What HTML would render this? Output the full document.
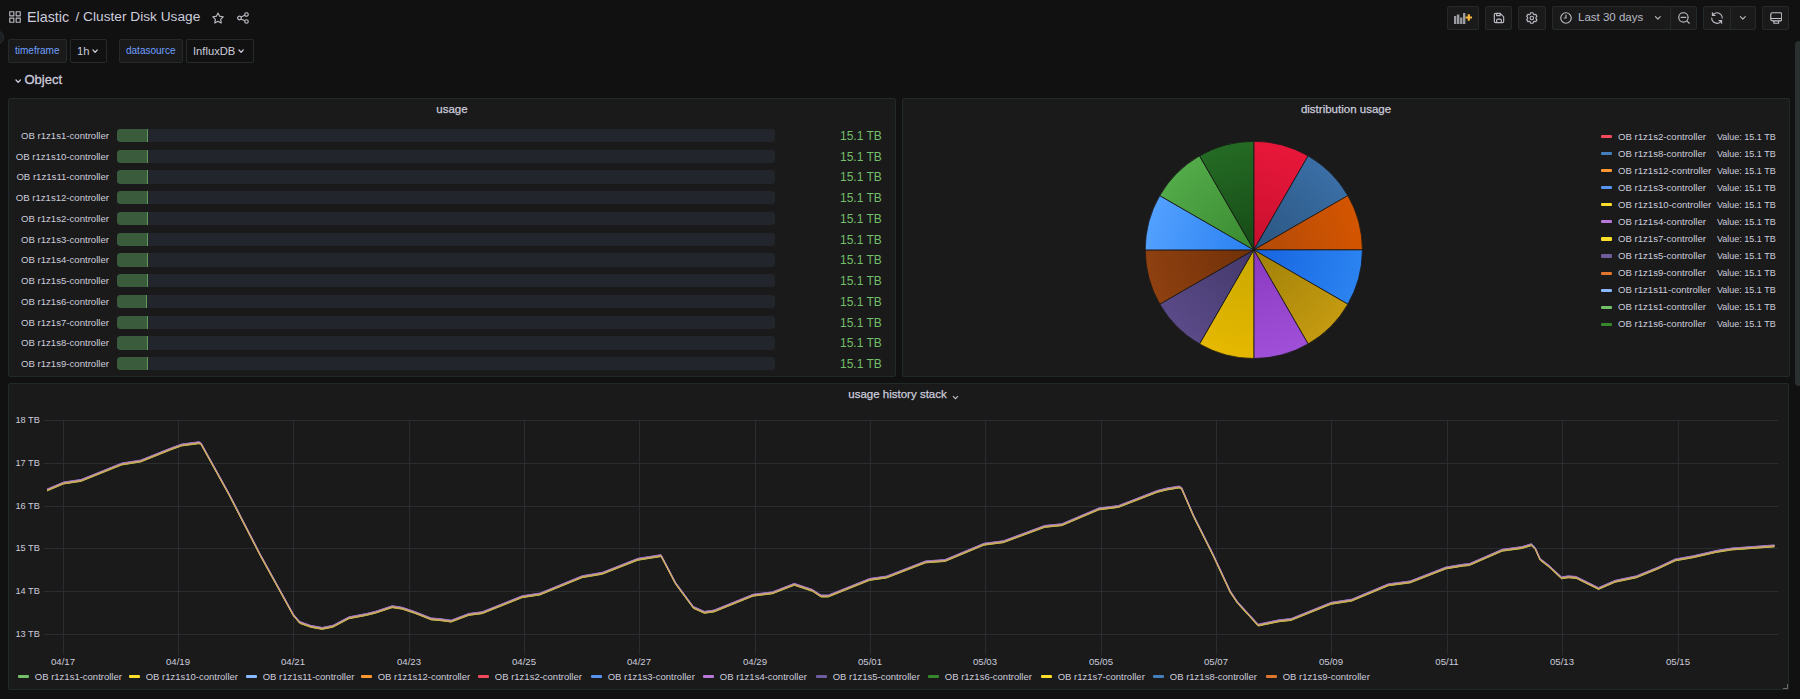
<!DOCTYPE html>
<html><head><meta charset="utf-8">
<style>
*{box-sizing:border-box;margin:0;padding:0}
html,body{width:1800px;height:699px;overflow:hidden;background:#111111;font-family:"Liberation Sans",sans-serif;color:#ccccdc;position:relative}
.abs{position:absolute}
.btn{position:absolute;top:6px;height:24px;background:#1a1a1a;border:1px solid #242a2b;border-radius:2px}
.varl{position:absolute;top:39px;height:24px;background:#1a1a1a;border:1px solid #242a2b;border-radius:2px;color:#6e9fff;font-size:10px;line-height:22px;padding-left:6px}
.varv{position:absolute;top:39px;height:24px;background:#111111;border:1px solid #242a2b;border-radius:2px;color:#ccccdc;font-size:11.2px;line-height:22px;padding-left:6px}
.panel{position:absolute;background:#1a1a1a;border:1px solid #222929;border-radius:2px}
.ptitle{position:absolute;left:0;right:0;text-align:center;font-size:11.5px;color:#ccccdc;top:2px;line-height:16px;-webkit-text-stroke:0.25px #ccccdc}
.bgr{position:absolute;left:0;width:886px;height:13.4px}
.bgl{position:absolute;right:786px;top:0;font-size:9.6px;line-height:13px;color:#ccccdc;white-space:nowrap}
.bgb{position:absolute;left:108px;width:658px;top:0;height:13.4px;background:#22252b;border-radius:3px;overflow:hidden}
.bgf{position:absolute;left:0;top:0;width:31px;height:13.4px;background:#3a5c3d;border-right:1.5px solid #5f9a58;border-radius:3px 0 0 3px}
.bgv{position:absolute;left:831px;top:-0.9px;font-size:12px;letter-spacing:0;line-height:16px;color:#73bf69;white-space:nowrap}
.pl{position:absolute;left:698px;height:13px;width:190px}
.pl i{position:absolute;left:0;top:6.4px;width:11px;height:3.2px;border-radius:1px}
.pl .pn{position:absolute;left:17px;top:1.0px;font-size:9.6px;line-height:13px;white-space:nowrap;color:#ccccdc}
.pl .pv{position:absolute;left:116px;top:2.0px;font-size:9px;line-height:13px;white-space:nowrap;color:#ccccdc}
.ylab{position:absolute;left:0;width:30.8px;text-align:right;font-size:9.2px;line-height:12px;color:#ccccdc;white-space:nowrap}
.xlab{position:absolute;top:272px;width:40px;text-align:center;font-size:9.6px;line-height:12px;color:#ccccdc}
.tsleg{position:absolute;left:0;top:286px;height:14px;width:1700px}
.li{position:absolute;top:0;height:14px;white-space:nowrap}
.li i{position:absolute;left:0;top:5.2px;width:11.1px;height:3.2px;border-radius:1px}
.li span{position:absolute;left:16.9px;top:0;font-size:9.5px;line-height:14px;color:#ccccdc}
</style></head><body>

<!-- sidebar toggle circle -->
<div class="abs" style="left:-11px;top:30px;width:15px;height:15px;border-radius:50%;background:#1c1f24;border:1px solid #2a2e33"></div>

<!-- header -->
<svg class="abs" style="left:7.80px;top:10.45px" width="14" height="14" viewBox="0 0 24 24"><path d="M10,13H3a1,1,0,0,0-1,1v7a1,1,0,0,0,1,1h7a1,1,0,0,0,1-1V14A1,1,0,0,0,10,13ZM9,20H4V15H9ZM21,2H14a1,1,0,0,0-1,1v7a1,1,0,0,0,1,1h7a1,1,0,0,0,1-1V3A1,1,0,0,0,21,2ZM20,9H15V4h5Zm1,4H14a1,1,0,0,0-1,1v7a1,1,0,0,0,1,1h7a1,1,0,0,0,1-1V14A1,1,0,0,0,21,13Zm-1,7H15V15h5ZM10,2H3A1,1,0,0,0,2,3v7a1,1,0,0,0,1,1h7a1,1,0,0,0,1-1V3A1,1,0,0,0,10,2ZM9,9H4V4H9Z" fill="#b9b9c2"/></svg>
<div class="abs" style="left:27px;top:8px;font-size:14.3px;line-height:18px;color:#ccccdc;white-space:nowrap">Elastic</div>
<div class="abs" style="left:75.5px;top:8px;font-size:13.7px;line-height:18px;color:#ccccdc;white-space:nowrap">/ Cluster Disk Usage</div>
<svg class="abs" style="left:210.80px;top:10.70px" width="14" height="14" viewBox="0 0 24 24"><path d="M22,9.67A1,1,0,0,0,21.14,9l-5.69-.83L12.9,3a1,1,0,0,0-1.8,0L8.55,8.16,2.86,9a1,1,0,0,0-.81.68,1,1,0,0,0,.25,1l4.13,4-1,5.68A1,1,0,0,0,6.9,21.44L12,18.77l5.1,2.67a.93.93,0,0,0,.46.12,1,1,0,0,0,.59-.19,1,1,0,0,0,.4-1l-1-5.68,4.13-4A1,1,0,0,0,22,9.67Zm-6.150,4a1,1,0,0,0-.29.88l.72,4.2-3.76-2a1.060,1.060,0,0,0-.94,0l-3.76,2,.72-4.2a1,1,0,0,0-.29-.88l-3-3,4.21-.61a1,1,0,0,0,.76-.55L12,5.7l1.88,3.82a1,1,0,0,0,.76.55l4.21.61Z" fill="#b9b9c2"/></svg>
<svg class="abs" style="left:235.75px;top:10.70px" width="14" height="14" viewBox="0 0 24 24"><path d="M18,14a4,4,0,0,0-3.08,1.48l-5.1-2.35a3.64,3.64,0,0,0,0-2.26l5.1-2.35A4,4,0,1,0,14,6a4.17,4.17,0,0,0,.07.71L8.79,9.14a4,4,0,1,0,0,5.72l5.28,2.43A4.17,4.17,0,0,0,14,18a4,4,0,1,0,4-4ZM18,4a2,2,0,1,1-2,2A2,2,0,0,1,18,4ZM6,14a2,2,0,1,1,2-2A2,2,0,0,1,6,14Zm12,6a2,2,0,1,1,2-2A2,2,0,0,1,18,20Z" fill="#b9b9c2"/></svg>

<!-- toolbar -->
<div class="btn" style="left:1447px;width:32px"></div>
<svg class="abs" style="left:1454px;top:12px" width="20" height="12" viewBox="0 0 20 12">
 <g fill="#9b9ca2"><rect x="0" y="4" width="2.2" height="8"/><rect x="2.8" y="2.5" width="2.6" height="9.5"/><rect x="6.1" y="5.5" width="2.3" height="6.5"/><rect x="9" y="1" width="2.4" height="11"/></g>
 <path d="M14.8 2.3v6.4M11.6 5.5h6.4" stroke="#f5b73d" stroke-width="2.2"/></svg>
<div class="btn" style="left:1485px;width:27px"></div>
<svg class="abs" style="left:1491.85px;top:11.00px" width="14" height="14" viewBox="0 0 24 24"><path d="M20.71,9.29l-6-6a1,1,0,0,0-.32-.21A1.090,1.090,0,0,0,14,3H6A3,3,0,0,0,3,6V18a3,3,0,0,0,3,3H18a3,3,0,0,0,3-3V10A1,1,0,0,0,20.71,9.29ZM9,5h4V7H9Zm6,14H9V16a1,1,0,0,1,1-1h4a1,1,0,0,1,1,1Zm4-1a1,1,0,0,1-1,1H17V16a3,3,0,0,0-3-3H10a3,3,0,0,0-3,3v3H6a1,1,0,0,1-1-1V6A1,1,0,0,1,6,5H7V8A1,1,0,0,0,8,9h6a1,1,0,0,0,1-1V6.410l4,4Z" fill="#b9b9c2"/></svg>
<div class="btn" style="left:1518px;width:28px"></div>
<svg class="abs" style="left:1524.90px;top:10.85px" width="14" height="14" viewBox="0 0 24 24"><path d="M19.9,12.66a1,1,0,0,1,0-1.32L21.18,9.9a1,1,0,0,0,.12-1.17l-2-3.46a1,1,0,0,0-1.07-.48l-1.88.38a1,1,0,0,1-1.15-.66l-.61-1.83A1,1,0,0,0,13.64,2h-4a1,1,0,0,0-1,.68L8.08,4.51a1,1,0,0,1-1.15.66L5,4.790A1,1,0,0,0,4,5.270L2,8.730A1,1,0,0,0,2.100,9.900l1.27,1.440a1,1,0,0,1,0,1.320L2.100,14.100A1,1,0,0,0,2,15.270l2,3.460a1,1,0,0,0,1.070.480l1.880-.380a1,1,0,0,1,1.150.660l.610,1.830a1,1,0,0,0,1,.680h4a1,1,0,0,0,.950-.680l.610-1.830a1,1,0,0,1,1.150-.660l1.880.380a1,1,0,0,0,1.070-.480l2-3.460a1,1,0,0,0-.120-1.170ZM18.410,14l.8.9-1.280,2.220-1.180-.240a3,3,0,0,0-3.450,2L12.920,20H10.360L10,18.860a3,3,0,0,0-3.450-2l-1.180.240L4.070,14.890l.8-.9a3,3,0,0,0,0-4l-.8-.9L5.350,6.890l1.180.240a3,3,0,0,0,3.450-2L10.360,4h2.560l.380,1.140a3,3,0,0,0,3.450,2l1.180-.240,1.280,2.220-.8.9a3,3,0,0,0,0,3.980Zm-6.770-6a4,4,0,1,0,4,4A4,4,0,0,0,11.640,8Zm0,6a2,2,0,1,1,2-2A2,2,0,0,1,11.640,14Z" fill="#b9b9c2"/></svg>
<div class="btn" style="left:1552px;width:145px"></div>
<div class="abs" style="left:1670px;top:7px;width:1px;height:22px;background:#242a2b"></div>
<svg class="abs" style="left:1558.60px;top:10.75px" width="14" height="14" viewBox="0 0 24 24"><path d="M12,2A10,10,0,1,0,22,12,10.011,10.011,0,0,0,12,2Zm0,18a8,8,0,1,1,8-8A8.009,8.009,0,0,1,12,20Zm0-14a1,1,0,0,0-1,1v4H9a1,1,0,0,0,0,2h3a1,1,0,0,0,1-1V7A1,1,0,0,0,12,6Z" fill="#b9b9c2"/></svg>
<div class="abs" style="left:1578px;top:10px;font-size:11.5px;line-height:15px;color:#b9b9c4;white-space:nowrap">Last 30 days</div>
<svg class="abs" style="left:1651.15px;top:10.90px" width="13.7" height="13.7" viewBox="0 0 24 24"><path d="M17,9.17a1,1,0,0,0-1.41,0L12,12.71,8.46,9.17a1,1,0,0,0-1.41,0,1,1,0,0,0,0,1.42l4.24,4.24a1,1,0,0,0,1.42,0L17,10.59A1,1,0,0,0,17,9.17Z" fill="#b9b9c2"/></svg>
<svg class="abs" style="left:1676.50px;top:10.75px" width="14" height="14" viewBox="0 0 24 24"><path d="M21.71,20.29,18,16.61A9,9,0,1,0,16.61,18l3.68,3.68a1,1,0,0,0,1.42,0A1,1,0,0,0,21.71,20.29ZM11,18a7,7,0,1,1,7-7A7,7,0,0,1,11,18Zm4-8H7a1,1,0,0,0,0,2h8a1,1,0,0,0,0-2Z" fill="#b9b9c2"/></svg>
<div class="btn" style="left:1703px;width:53px"></div>
<div class="abs" style="left:1730px;top:7px;width:1px;height:22px;background:#242a2b"></div>
<svg class="abs" style="left:1709.50px;top:10.80px" width="14" height="14" viewBox="0 0 24 24"><path d="M19.91,15.51H15.38a1,1,0,0,0,0,2h2.4A8,8,0,0,1,4,12a1,1,0,0,0-2,0,10,10,0,0,0,16.88,7.23V21a1,1,0,0,0,2,0V16.5A1,1,0,0,0,19.91,15.51ZM12,2A10,10,0,0,0,5.12,4.77V3a1,1,0,0,0-2,0V7.5a1,1,0,0,0,1,1h4.5a1,1,0,0,0,0-2H6.22A8,8,0,0,1,20,12a1,1,0,0,0,2,0A10,10,0,0,0,12,2Z" fill="#b9b9c2"/></svg>
<svg class="abs" style="left:1736.15px;top:10.90px" width="13.7" height="13.7" viewBox="0 0 24 24"><path d="M17,9.17a1,1,0,0,0-1.41,0L12,12.71,8.46,9.17a1,1,0,0,0-1.41,0,1,1,0,0,0,0,1.42l4.24,4.24a1,1,0,0,0,1.42,0L17,10.59A1,1,0,0,0,17,9.17Z" fill="#b9b9c2"/></svg>
<div class="btn" style="left:1762px;width:27px"></div>
<svg class="abs" style="left:1769.5px;top:11.5px" width="12.5" height="12.5" viewBox="0 0 24 24"><g fill="none" stroke="#c2c2cc" stroke-width="2.2" stroke-linejoin="round"><rect x="1.5" y="1.5" width="21" height="15.5" rx="3"/><path d="M1.5 12.5h21M7.5 17v4.5h9V17"/></g></svg>

<!-- variables -->
<div class="varl" style="left:8px;width:59px">timeframe</div>
<div class="varv" style="left:70px;width:37px">1h</div>
<svg class="abs" style="left:92.15px;top:48.95px" width="6.2" height="4.3" viewBox="0 0 6.2 4.3"><path d="M1 1L3.1 3.3L5.2 1" fill="none" stroke="#ccccdc" stroke-width="1.2" stroke-linecap="round" stroke-linejoin="round"/></svg>
<div class="varl" style="left:119px;width:64px">datasource</div>
<div class="varv" style="left:186px;width:68px">InfluxDB</div>
<svg class="abs" style="left:238.15px;top:48.95px" width="6.2" height="4.3" viewBox="0 0 6.2 4.3"><path d="M1 1L3.1 3.3L5.2 1" fill="none" stroke="#ccccdc" stroke-width="1.2" stroke-linecap="round" stroke-linejoin="round"/></svg>

<!-- row -->
<svg class="abs" style="left:14.80px;top:78.60px" width="6.4" height="4.4" viewBox="0 0 6.4 4.4"><path d="M1 1L3.2 3.4L5.4 1" fill="none" stroke="#ccccdc" stroke-width="1.3" stroke-linecap="round" stroke-linejoin="round"/></svg>
<div class="abs" style="left:24.5px;top:72px;font-size:13px;line-height:16px;color:#ccccdc;white-space:nowrap;-webkit-text-stroke:0.3px #ccccdc">Object</div>

<!-- panel 1 -->
<div class="panel" style="left:8px;top:98px;width:888px;height:279px">
 <div class="ptitle">usage</div>
 <div class="bgr" style="top:29.80px"><div class="bgl">OB r1z1s1-controller</div><div class="bgb"><div class="bgf"></div></div><div class="bgv">15.1 TB</div></div><div class="bgr" style="top:50.55px"><div class="bgl">OB r1z1s10-controller</div><div class="bgb"><div class="bgf"></div></div><div class="bgv">15.1 TB</div></div><div class="bgr" style="top:71.30px"><div class="bgl">OB r1z1s11-controller</div><div class="bgb"><div class="bgf"></div></div><div class="bgv">15.1 TB</div></div><div class="bgr" style="top:92.05px"><div class="bgl">OB r1z1s12-controller</div><div class="bgb"><div class="bgf"></div></div><div class="bgv">15.1 TB</div></div><div class="bgr" style="top:112.80px"><div class="bgl">OB r1z1s2-controller</div><div class="bgb"><div class="bgf"></div></div><div class="bgv">15.1 TB</div></div><div class="bgr" style="top:133.55px"><div class="bgl">OB r1z1s3-controller</div><div class="bgb"><div class="bgf"></div></div><div class="bgv">15.1 TB</div></div><div class="bgr" style="top:154.30px"><div class="bgl">OB r1z1s4-controller</div><div class="bgb"><div class="bgf"></div></div><div class="bgv">15.1 TB</div></div><div class="bgr" style="top:175.05px"><div class="bgl">OB r1z1s5-controller</div><div class="bgb"><div class="bgf"></div></div><div class="bgv">15.1 TB</div></div><div class="bgr" style="top:195.80px"><div class="bgl">OB r1z1s6-controller</div><div class="bgb"><div class="bgf" style="width:30px"></div></div><div class="bgv">15.1 TB</div></div><div class="bgr" style="top:216.55px"><div class="bgl">OB r1z1s7-controller</div><div class="bgb"><div class="bgf"></div></div><div class="bgv">15.1 TB</div></div><div class="bgr" style="top:237.30px"><div class="bgl">OB r1z1s8-controller</div><div class="bgb"><div class="bgf"></div></div><div class="bgv">15.1 TB</div></div><div class="bgr" style="top:258.05px"><div class="bgl">OB r1z1s9-controller</div><div class="bgb"><div class="bgf"></div></div><div class="bgv">15.1 TB</div></div>
</div>

<!-- panel 2 -->
<div class="panel" style="left:902px;top:98px;width:888px;height:279px">
 <div class="ptitle">distribution usage</div>
 <svg class="abs" style="left:0;top:0" width="886" height="277"><defs><radialGradient id="g0" gradientUnits="userSpaceOnUse" cx="350.79999999999995" cy="150.9" r="108.6"><stop offset="0" stop-color="#c8102e"/><stop offset="1" stop-color="#e8173a"/></radialGradient><radialGradient id="g1" gradientUnits="userSpaceOnUse" cx="350.79999999999995" cy="150.9" r="108.6"><stop offset="0" stop-color="#2a5580"/><stop offset="1" stop-color="#3a6ea5"/></radialGradient><radialGradient id="g2" gradientUnits="userSpaceOnUse" cx="350.79999999999995" cy="150.9" r="108.6"><stop offset="0" stop-color="#b04a08"/><stop offset="1" stop-color="#d45500"/></radialGradient><radialGradient id="g3" gradientUnits="userSpaceOnUse" cx="350.79999999999995" cy="150.9" r="108.6"><stop offset="0" stop-color="#1664e0"/><stop offset="1" stop-color="#2b83f0"/></radialGradient><radialGradient id="g4" gradientUnits="userSpaceOnUse" cx="350.79999999999995" cy="150.9" r="108.6"><stop offset="0" stop-color="#a08008"/><stop offset="1" stop-color="#c49a10"/></radialGradient><radialGradient id="g5" gradientUnits="userSpaceOnUse" cx="350.79999999999995" cy="150.9" r="108.6"><stop offset="0" stop-color="#8a38c0"/><stop offset="1" stop-color="#a050d8"/></radialGradient><radialGradient id="g6" gradientUnits="userSpaceOnUse" cx="350.79999999999995" cy="150.9" r="108.6"><stop offset="0" stop-color="#c8a800"/><stop offset="1" stop-color="#e6b800"/></radialGradient><radialGradient id="g7" gradientUnits="userSpaceOnUse" cx="350.79999999999995" cy="150.9" r="108.6"><stop offset="0" stop-color="#43386a"/><stop offset="1" stop-color="#5a4a88"/></radialGradient><radialGradient id="g8" gradientUnits="userSpaceOnUse" cx="350.79999999999995" cy="150.9" r="108.6"><stop offset="0" stop-color="#703008"/><stop offset="1" stop-color="#8e4010"/></radialGradient><radialGradient id="g9" gradientUnits="userSpaceOnUse" cx="350.79999999999995" cy="150.9" r="108.6"><stop offset="0" stop-color="#2a80f0"/><stop offset="1" stop-color="#52a0ff"/></radialGradient><radialGradient id="g10" gradientUnits="userSpaceOnUse" cx="350.79999999999995" cy="150.9" r="108.6"><stop offset="0" stop-color="#3a8a30"/><stop offset="1" stop-color="#52aa48"/></radialGradient><radialGradient id="g11" gradientUnits="userSpaceOnUse" cx="350.79999999999995" cy="150.9" r="108.6"><stop offset="0" stop-color="#164a16"/><stop offset="1" stop-color="#246a24"/></radialGradient></defs><path d="M350.79999999999995,150.9 L350.80,42.30 A108.6,108.6 0 0 1 405.10,56.85 Z" fill="url(#g0)" stroke="#161616" stroke-width="0.8"/><path d="M350.79999999999995,150.9 L405.10,56.85 A108.6,108.6 0 0 1 444.85,96.60 Z" fill="url(#g1)" stroke="#161616" stroke-width="0.8"/><path d="M350.79999999999995,150.9 L444.85,96.60 A108.6,108.6 0 0 1 459.40,150.90 Z" fill="url(#g2)" stroke="#161616" stroke-width="0.8"/><path d="M350.79999999999995,150.9 L459.40,150.90 A108.6,108.6 0 0 1 444.85,205.20 Z" fill="url(#g3)" stroke="#161616" stroke-width="0.8"/><path d="M350.79999999999995,150.9 L444.85,205.20 A108.6,108.6 0 0 1 405.10,244.95 Z" fill="url(#g4)" stroke="#161616" stroke-width="0.8"/><path d="M350.79999999999995,150.9 L405.10,244.95 A108.6,108.6 0 0 1 350.80,259.50 Z" fill="url(#g5)" stroke="#161616" stroke-width="0.8"/><path d="M350.79999999999995,150.9 L350.80,259.50 A108.6,108.6 0 0 1 296.50,244.95 Z" fill="url(#g6)" stroke="#161616" stroke-width="0.8"/><path d="M350.79999999999995,150.9 L296.50,244.95 A108.6,108.6 0 0 1 256.75,205.20 Z" fill="url(#g7)" stroke="#161616" stroke-width="0.8"/><path d="M350.79999999999995,150.9 L256.75,205.20 A108.6,108.6 0 0 1 242.20,150.90 Z" fill="url(#g8)" stroke="#161616" stroke-width="0.8"/><path d="M350.79999999999995,150.9 L242.20,150.90 A108.6,108.6 0 0 1 256.75,96.60 Z" fill="url(#g9)" stroke="#161616" stroke-width="0.8"/><path d="M350.79999999999995,150.9 L256.75,96.60 A108.6,108.6 0 0 1 296.50,56.85 Z" fill="url(#g10)" stroke="#161616" stroke-width="0.8"/><path d="M350.79999999999995,150.9 L296.50,56.85 A108.6,108.6 0 0 1 350.80,42.30 Z" fill="url(#g11)" stroke="#161616" stroke-width="0.8"/></svg>
 <div class="pl" style="top:29.50px"><i style="background:#f2495c"></i><span class="pn">OB r1z1s2-controller</span><span class="pv">Value: 15.1 TB</span></div><div class="pl" style="top:46.58px"><i style="background:#447ebc"></i><span class="pn">OB r1z1s8-controller</span><span class="pv">Value: 15.1 TB</span></div><div class="pl" style="top:63.66px"><i style="background:#ff9830"></i><span class="pn">OB r1z1s12-controller</span><span class="pv">Value: 15.1 TB</span></div><div class="pl" style="top:80.74px"><i style="background:#5794f2"></i><span class="pn">OB r1z1s3-controller</span><span class="pv">Value: 15.1 TB</span></div><div class="pl" style="top:97.82px"><i style="background:#fade2a"></i><span class="pn">OB r1z1s10-controller</span><span class="pv">Value: 15.1 TB</span></div><div class="pl" style="top:114.90px"><i style="background:#b877d9"></i><span class="pn">OB r1z1s4-controller</span><span class="pv">Value: 15.1 TB</span></div><div class="pl" style="top:131.98px"><i style="background:#fade2a"></i><span class="pn">OB r1z1s7-controller</span><span class="pv">Value: 15.1 TB</span></div><div class="pl" style="top:149.06px"><i style="background:#705da0"></i><span class="pn">OB r1z1s5-controller</span><span class="pv">Value: 15.1 TB</span></div><div class="pl" style="top:166.14px"><i style="background:#e0752d"></i><span class="pn">OB r1z1s9-controller</span><span class="pv">Value: 15.1 TB</span></div><div class="pl" style="top:183.22px"><i style="background:#8ab8ff"></i><span class="pn">OB r1z1s11-controller</span><span class="pv">Value: 15.1 TB</span></div><div class="pl" style="top:200.30px"><i style="background:#73bf69"></i><span class="pn">OB r1z1s1-controller</span><span class="pv">Value: 15.1 TB</span></div><div class="pl" style="top:217.38px"><i style="background:#37872d"></i><span class="pn">OB r1z1s6-controller</span><span class="pv">Value: 15.1 TB</span></div>
</div>

<!-- panel 3 -->
<div class="panel" style="left:8px;top:383px;width:1781px;height:307px">
 <div class="ptitle" style="right:2px">usage history stack</div>
 <svg class="abs" style="left:942.5px;top:10.5px" width="7" height="5" viewBox="0 0 7 5"><path d="M1 1.2l2.5 2.5 2.5-2.5" fill="none" stroke="#c0c0ca" stroke-width="1.1"/></svg>
 <svg class="abs" style="left:-1px;top:-1px" width="1781" height="307"><line x1="36" y1="37.5" x2="1770" y2="37.5" stroke="#292c31" stroke-width="1"/>
<line x1="36" y1="80.5" x2="1770" y2="80.5" stroke="#292c31" stroke-width="1"/>
<line x1="36" y1="123.5" x2="1770" y2="123.5" stroke="#292c31" stroke-width="1"/>
<line x1="36" y1="165.5" x2="1770" y2="165.5" stroke="#292c31" stroke-width="1"/>
<line x1="36" y1="208.5" x2="1770" y2="208.5" stroke="#292c31" stroke-width="1"/>
<line x1="36" y1="251.5" x2="1770" y2="251.5" stroke="#292c31" stroke-width="1"/>
<line x1="55.5" y1="37" x2="55.5" y2="272" stroke="#292c31" stroke-width="1"/>
<line x1="170.5" y1="37" x2="170.5" y2="272" stroke="#292c31" stroke-width="1"/>
<line x1="285.5" y1="37" x2="285.5" y2="272" stroke="#292c31" stroke-width="1"/>
<line x1="401.5" y1="37" x2="401.5" y2="272" stroke="#292c31" stroke-width="1"/>
<line x1="516.5" y1="37" x2="516.5" y2="272" stroke="#292c31" stroke-width="1"/>
<line x1="631.5" y1="37" x2="631.5" y2="272" stroke="#292c31" stroke-width="1"/>
<line x1="747.5" y1="37" x2="747.5" y2="272" stroke="#292c31" stroke-width="1"/>
<line x1="862.5" y1="37" x2="862.5" y2="272" stroke="#292c31" stroke-width="1"/>
<line x1="977.5" y1="37" x2="977.5" y2="272" stroke="#292c31" stroke-width="1"/>
<line x1="1093.5" y1="37" x2="1093.5" y2="272" stroke="#292c31" stroke-width="1"/>
<line x1="1208.5" y1="37" x2="1208.5" y2="272" stroke="#292c31" stroke-width="1"/>
<line x1="1323.5" y1="37" x2="1323.5" y2="272" stroke="#292c31" stroke-width="1"/>
<line x1="1439.5" y1="37" x2="1439.5" y2="272" stroke="#292c31" stroke-width="1"/>
<line x1="1554.5" y1="37" x2="1554.5" y2="272" stroke="#292c31" stroke-width="1"/>
<line x1="1670.5" y1="37" x2="1670.5" y2="272" stroke="#292c31" stroke-width="1"/>
<path d="M39.00,106.05 L55.60,99.05 L73.00,96.45 L79.00,94.05 L113.80,80.05 L132.70,77.05 L162.60,65.05 L173.60,61.05 L191.00,58.75 L193.00,59.65 L220.90,110.05 L252.30,171.05 L285.40,231.05 L291.70,238.45 L303.00,242.45 L314.20,244.45 L325.00,242.25 L340.90,233.85 L358.70,230.45 L367.60,228.25 L384.20,222.75 L394.20,224.25 L407.60,228.75 L423.10,234.95 L432.00,235.65 L443.10,237.15 L460.90,230.45 L474.20,228.75 L514.20,212.75 L532.00,210.05 L574.20,192.75 L594.20,189.35 L629.80,175.35 L653.10,171.65 L667.60,199.35 L685.40,223.45 L696.30,228.35 L706.00,227.05 L745.00,211.25 L764.40,208.85 L786.30,200.35 L804.50,206.45 L813.00,212.05 L820.30,212.05 L861.70,195.45 L878.70,193.05 L917.60,177.95 L937.00,176.55 L976.00,160.25 L995.40,157.75 L1036.70,142.45 L1053.80,140.75 L1090.90,124.95 L1110.40,122.55 L1149.30,107.45 L1159.00,105.05 L1171.10,103.05 L1173.60,104.25 L1185.70,132.25 L1205.20,171.15 L1222.20,207.65 L1229.50,218.55 L1250.20,241.15 L1270.80,236.85 L1283.00,235.55 L1323.10,219.35 L1343.80,216.15 L1380.30,200.85 L1402.20,197.95 L1437.80,184.05 L1455.30,181.15 L1461.20,180.65 L1494.20,166.25 L1513.70,163.65 L1523.40,160.75 L1527.30,164.65 L1532.10,175.35 L1540.90,182.15 L1553.50,193.85 L1560.30,192.85 L1568.10,193.45 L1590.50,204.55 L1607.00,197.35 L1628.40,192.85 L1649.80,184.15 L1667.30,175.95 L1684.80,172.85 L1708.10,167.55 L1723.70,165.05 L1766.40,161.95" fill="none" stroke="#b877d9" stroke-width="1.0" stroke-linejoin="round"/>
<path d="M39.00,107.95 L55.60,100.95 L73.00,98.35 L79.00,95.95 L113.80,81.95 L132.70,78.95 L162.60,66.95 L173.60,62.95 L191.00,60.65 L193.00,61.55 L220.90,111.95 L252.30,172.95 L285.40,232.95 L291.70,240.35 L303.00,244.35 L314.20,246.35 L325.00,244.15 L340.90,235.75 L358.70,232.35 L367.60,230.15 L384.20,224.65 L394.20,226.15 L407.60,230.65 L423.10,236.85 L432.00,237.55 L443.10,239.05 L460.90,232.35 L474.20,230.65 L514.20,214.65 L532.00,211.95 L574.20,194.65 L594.20,191.25 L629.80,177.25 L653.10,173.55 L667.60,201.25 L685.40,225.35 L696.30,230.25 L706.00,228.95 L745.00,213.15 L764.40,210.75 L786.30,202.25 L804.50,208.35 L813.00,213.95 L820.30,213.95 L861.70,197.35 L878.70,194.95 L917.60,179.85 L937.00,178.45 L976.00,162.15 L995.40,159.65 L1036.70,144.35 L1053.80,142.65 L1090.90,126.85 L1110.40,124.45 L1149.30,109.35 L1159.00,106.95 L1171.10,104.95 L1173.60,106.15 L1185.70,134.15 L1205.20,173.05 L1222.20,209.55 L1229.50,220.45 L1250.20,243.05 L1270.80,238.75 L1283.00,237.45 L1323.10,221.25 L1343.80,218.05 L1380.30,202.75 L1402.20,199.85 L1437.80,185.95 L1455.30,183.05 L1461.20,182.55 L1494.20,168.15 L1513.70,165.55 L1523.40,162.65 L1527.30,166.55 L1532.10,177.25 L1540.90,184.05 L1553.50,195.75 L1560.30,194.75 L1568.10,195.35 L1590.50,206.45 L1607.00,199.25 L1628.40,194.75 L1649.80,186.05 L1667.30,177.85 L1684.80,174.75 L1708.10,169.45 L1723.70,166.95 L1766.40,163.85" fill="none" stroke="#fade2a" stroke-width="1.0" stroke-linejoin="round"/>
<path d="M39.00,106.40 L55.60,99.40 L73.00,96.80 L79.00,94.40 L113.80,80.40 L132.70,77.40 L162.60,65.40 L173.60,61.40 L191.00,59.10 L193.00,60.00 L220.90,110.40 L252.30,171.40 L285.40,231.40 L291.70,238.80 L303.00,242.80 L314.20,244.80 L325.00,242.60 L340.90,234.20 L358.70,230.80 L367.60,228.60 L384.20,223.10 L394.20,224.60 L407.60,229.10 L423.10,235.30 L432.00,236.00 L443.10,237.50 L460.90,230.80 L474.20,229.10 L514.20,213.10 L532.00,210.40 L574.20,193.10 L594.20,189.70 L629.80,175.70 L653.10,172.00 L667.60,199.70 L685.40,223.80 L696.30,228.70 L706.00,227.40 L745.00,211.60 L764.40,209.20 L786.30,200.70 L804.50,206.80 L813.00,212.40 L820.30,212.40 L861.70,195.80 L878.70,193.40 L917.60,178.30 L937.00,176.90 L976.00,160.60 L995.40,158.10 L1036.70,142.80 L1053.80,141.10 L1090.90,125.30 L1110.40,122.90 L1149.30,107.80 L1159.00,105.40 L1171.10,103.40 L1173.60,104.60 L1185.70,132.60 L1205.20,171.50 L1222.20,208.00 L1229.50,218.90 L1250.20,241.50 L1270.80,237.20 L1283.00,235.90 L1323.10,219.70 L1343.80,216.50 L1380.30,201.20 L1402.20,198.30 L1437.80,184.40 L1455.30,181.50 L1461.20,181.00 L1494.20,166.60 L1513.70,164.00 L1523.40,161.10 L1527.30,165.00 L1532.10,175.70 L1540.90,182.50 L1553.50,194.20 L1560.30,193.20 L1568.10,193.80 L1590.50,204.90 L1607.00,197.70 L1628.40,193.20 L1649.80,184.50 L1667.30,176.30 L1684.80,173.20 L1708.10,167.90 L1723.70,165.40 L1766.40,162.30" fill="none" stroke="#5794f2" stroke-width="1.0" stroke-linejoin="round"/>
<path d="M39.00,107.65 L55.60,100.65 L73.00,98.05 L79.00,95.65 L113.80,81.65 L132.70,78.65 L162.60,66.65 L173.60,62.65 L191.00,60.35 L193.00,61.25 L220.90,111.65 L252.30,172.65 L285.40,232.65 L291.70,240.05 L303.00,244.05 L314.20,246.05 L325.00,243.85 L340.90,235.45 L358.70,232.05 L367.60,229.85 L384.20,224.35 L394.20,225.85 L407.60,230.35 L423.10,236.55 L432.00,237.25 L443.10,238.75 L460.90,232.05 L474.20,230.35 L514.20,214.35 L532.00,211.65 L574.20,194.35 L594.20,190.95 L629.80,176.95 L653.10,173.25 L667.60,200.95 L685.40,225.05 L696.30,229.95 L706.00,228.65 L745.00,212.85 L764.40,210.45 L786.30,201.95 L804.50,208.05 L813.00,213.65 L820.30,213.65 L861.70,197.05 L878.70,194.65 L917.60,179.55 L937.00,178.15 L976.00,161.85 L995.40,159.35 L1036.70,144.05 L1053.80,142.35 L1090.90,126.55 L1110.40,124.15 L1149.30,109.05 L1159.00,106.65 L1171.10,104.65 L1173.60,105.85 L1185.70,133.85 L1205.20,172.75 L1222.20,209.25 L1229.50,220.15 L1250.20,242.75 L1270.80,238.45 L1283.00,237.15 L1323.10,220.95 L1343.80,217.75 L1380.30,202.45 L1402.20,199.55 L1437.80,185.65 L1455.30,182.75 L1461.20,182.25 L1494.20,167.85 L1513.70,165.25 L1523.40,162.35 L1527.30,166.25 L1532.10,176.95 L1540.90,183.75 L1553.50,195.45 L1560.30,194.45 L1568.10,195.05 L1590.50,206.15 L1607.00,198.95 L1628.40,194.45 L1649.80,185.75 L1667.30,177.55 L1684.80,174.45 L1708.10,169.15 L1723.70,166.65 L1766.40,163.55" fill="none" stroke="#73bf69" stroke-width="1.0" stroke-linejoin="round"/>
<path d="M39.00,106.70 L55.60,99.70 L73.00,97.10 L79.00,94.70 L113.80,80.70 L132.70,77.70 L162.60,65.70 L173.60,61.70 L191.00,59.40 L193.00,60.30 L220.90,110.70 L252.30,171.70 L285.40,231.70 L291.70,239.10 L303.00,243.10 L314.20,245.10 L325.00,242.90 L340.90,234.50 L358.70,231.10 L367.60,228.90 L384.20,223.40 L394.20,224.90 L407.60,229.40 L423.10,235.60 L432.00,236.30 L443.10,237.80 L460.90,231.10 L474.20,229.40 L514.20,213.40 L532.00,210.70 L574.20,193.40 L594.20,190.00 L629.80,176.00 L653.10,172.30 L667.60,200.00 L685.40,224.10 L696.30,229.00 L706.00,227.70 L745.00,211.90 L764.40,209.50 L786.30,201.00 L804.50,207.10 L813.00,212.70 L820.30,212.70 L861.70,196.10 L878.70,193.70 L917.60,178.60 L937.00,177.20 L976.00,160.90 L995.40,158.40 L1036.70,143.10 L1053.80,141.40 L1090.90,125.60 L1110.40,123.20 L1149.30,108.10 L1159.00,105.70 L1171.10,103.70 L1173.60,104.90 L1185.70,132.90 L1205.20,171.80 L1222.20,208.30 L1229.50,219.20 L1250.20,241.80 L1270.80,237.50 L1283.00,236.20 L1323.10,220.00 L1343.80,216.80 L1380.30,201.50 L1402.20,198.60 L1437.80,184.70 L1455.30,181.80 L1461.20,181.30 L1494.20,166.90 L1513.70,164.30 L1523.40,161.40 L1527.30,165.30 L1532.10,176.00 L1540.90,182.80 L1553.50,194.50 L1560.30,193.50 L1568.10,194.10 L1590.50,205.20 L1607.00,198.00 L1628.40,193.50 L1649.80,184.80 L1667.30,176.60 L1684.80,173.50 L1708.10,168.20 L1723.70,165.70 L1766.40,162.60" fill="none" stroke="#f2495c" stroke-width="1.0" stroke-linejoin="round"/>
<path d="M39.00,107.35 L55.60,100.35 L73.00,97.75 L79.00,95.35 L113.80,81.35 L132.70,78.35 L162.60,66.35 L173.60,62.35 L191.00,60.05 L193.00,60.95 L220.90,111.35 L252.30,172.35 L285.40,232.35 L291.70,239.75 L303.00,243.75 L314.20,245.75 L325.00,243.55 L340.90,235.15 L358.70,231.75 L367.60,229.55 L384.20,224.05 L394.20,225.55 L407.60,230.05 L423.10,236.25 L432.00,236.95 L443.10,238.45 L460.90,231.75 L474.20,230.05 L514.20,214.05 L532.00,211.35 L574.20,194.05 L594.20,190.65 L629.80,176.65 L653.10,172.95 L667.60,200.65 L685.40,224.75 L696.30,229.65 L706.00,228.35 L745.00,212.55 L764.40,210.15 L786.30,201.65 L804.50,207.75 L813.00,213.35 L820.30,213.35 L861.70,196.75 L878.70,194.35 L917.60,179.25 L937.00,177.85 L976.00,161.55 L995.40,159.05 L1036.70,143.75 L1053.80,142.05 L1090.90,126.25 L1110.40,123.85 L1149.30,108.75 L1159.00,106.35 L1171.10,104.35 L1173.60,105.55 L1185.70,133.55 L1205.20,172.45 L1222.20,208.95 L1229.50,219.85 L1250.20,242.45 L1270.80,238.15 L1283.00,236.85 L1323.10,220.65 L1343.80,217.45 L1380.30,202.15 L1402.20,199.25 L1437.80,185.35 L1455.30,182.45 L1461.20,181.95 L1494.20,167.55 L1513.70,164.95 L1523.40,162.05 L1527.30,165.95 L1532.10,176.65 L1540.90,183.45 L1553.50,195.15 L1560.30,194.15 L1568.10,194.75 L1590.50,205.85 L1607.00,198.65 L1628.40,194.15 L1649.80,185.45 L1667.30,177.25 L1684.80,174.15 L1708.10,168.85 L1723.70,166.35 L1766.40,163.25" fill="none" stroke="#ff9830" stroke-width="1.0" stroke-linejoin="round"/>
<path d="M39.00,107.00 L55.60,100.00 L73.00,97.40 L79.00,95.00 L113.80,81.00 L132.70,78.00 L162.60,66.00 L173.60,62.00 L191.00,59.70 L193.00,60.60 L220.90,111.00 L252.30,172.00 L285.40,232.00 L291.70,239.40 L303.00,243.40 L314.20,245.40 L325.00,243.20 L340.90,234.80 L358.70,231.40 L367.60,229.20 L384.20,223.70 L394.20,225.20 L407.60,229.70 L423.10,235.90 L432.00,236.60 L443.10,238.10 L460.90,231.40 L474.20,229.70 L514.20,213.70 L532.00,211.00 L574.20,193.70 L594.20,190.30 L629.80,176.30 L653.10,172.60 L667.60,200.30 L685.40,224.40 L696.30,229.30 L706.00,228.00 L745.00,212.20 L764.40,209.80 L786.30,201.30 L804.50,207.40 L813.00,213.00 L820.30,213.00 L861.70,196.40 L878.70,194.00 L917.60,178.90 L937.00,177.50 L976.00,161.20 L995.40,158.70 L1036.70,143.40 L1053.80,141.70 L1090.90,125.90 L1110.40,123.50 L1149.30,108.40 L1159.00,106.00 L1171.10,104.00 L1173.60,105.20 L1185.70,133.20 L1205.20,172.10 L1222.20,208.60 L1229.50,219.50 L1250.20,242.10 L1270.80,237.80 L1283.00,236.50 L1323.10,220.30 L1343.80,217.10 L1380.30,201.80 L1402.20,198.90 L1437.80,185.00 L1455.30,182.10 L1461.20,181.60 L1494.20,167.20 L1513.70,164.60 L1523.40,161.70 L1527.30,165.60 L1532.10,176.30 L1540.90,183.10 L1553.50,194.80 L1560.30,193.80 L1568.10,194.40 L1590.50,205.50 L1607.00,198.30 L1628.40,193.80 L1649.80,185.10 L1667.30,176.90 L1684.80,173.80 L1708.10,168.50 L1723.70,166.00 L1766.40,162.90" fill="none" stroke="#8ab8ff" stroke-width="1.0" stroke-linejoin="round"/>
<path d="M39.00,107.12 L55.60,100.12 L73.00,97.52 L79.00,95.12 L113.80,81.12 L132.70,78.12 L162.60,66.12 L173.60,62.12 L191.00,59.82 L193.00,60.72 L220.90,111.12 L252.30,172.12 L285.40,232.12 L291.70,239.52 L303.00,243.52 L314.20,245.52 L325.00,243.32 L340.90,234.92 L358.70,231.52 L367.60,229.32 L384.20,223.82 L394.20,225.32 L407.60,229.82 L423.10,236.02 L432.00,236.72 L443.10,238.22 L460.90,231.52 L474.20,229.82 L514.20,213.82 L532.00,211.12 L574.20,193.82 L594.20,190.42 L629.80,176.42 L653.10,172.72 L667.60,200.42 L685.40,224.52 L696.30,229.42 L706.00,228.12 L745.00,212.32 L764.40,209.92 L786.30,201.42 L804.50,207.52 L813.00,213.12 L820.30,213.12 L861.70,196.52 L878.70,194.12 L917.60,179.02 L937.00,177.62 L976.00,161.32 L995.40,158.82 L1036.70,143.52 L1053.80,141.82 L1090.90,126.02 L1110.40,123.62 L1149.30,108.52 L1159.00,106.12 L1171.10,104.12 L1173.60,105.32 L1185.70,133.32 L1205.20,172.22 L1222.20,208.72 L1229.50,219.62 L1250.20,242.22 L1270.80,237.92 L1283.00,236.62 L1323.10,220.42 L1343.80,217.22 L1380.30,201.92 L1402.20,199.02 L1437.80,185.12 L1455.30,182.22 L1461.20,181.72 L1494.20,167.32 L1513.70,164.72 L1523.40,161.82 L1527.30,165.72 L1532.10,176.42 L1540.90,183.22 L1553.50,194.92 L1560.30,193.92 L1568.10,194.52 L1590.50,205.62 L1607.00,198.42 L1628.40,193.92 L1649.80,185.22 L1667.30,177.02 L1684.80,173.92 L1708.10,168.62 L1723.70,166.12 L1766.40,163.02" fill="none" stroke="#d8a05a" stroke-width="1.0" stroke-linejoin="round"/></svg>
 <div class="ylab" style="top:29.8px">18 TB</div><div class="ylab" style="top:72.8px">17 TB</div><div class="ylab" style="top:115.8px">16 TB</div><div class="ylab" style="top:157.8px">15 TB</div><div class="ylab" style="top:200.8px">14 TB</div><div class="ylab" style="top:243.8px">13 TB</div>
 <div class="xlab" style="left:34.0px">04/17</div><div class="xlab" style="left:149.0px">04/19</div><div class="xlab" style="left:264.0px">04/21</div><div class="xlab" style="left:380.0px">04/23</div><div class="xlab" style="left:495.0px">04/25</div><div class="xlab" style="left:610.0px">04/27</div><div class="xlab" style="left:726.0px">04/29</div><div class="xlab" style="left:841.0px">05/01</div><div class="xlab" style="left:956.0px">05/03</div><div class="xlab" style="left:1072.0px">05/05</div><div class="xlab" style="left:1187.0px">05/07</div><div class="xlab" style="left:1302.0px">05/09</div><div class="xlab" style="left:1418.0px">05/11</div><div class="xlab" style="left:1533.0px">05/13</div><div class="xlab" style="left:1649.0px">05/15</div>
 <div class="tsleg"><div class="li" style="left:8.90px"><i style="background:#73bf69"></i><span>OB r1z1s1-controller</span></div><div class="li" style="left:119.75px"><i style="background:#fade2a"></i><span>OB r1z1s10-controller</span></div><div class="li" style="left:236.80px"><i style="background:#8ab8ff"></i><span>OB r1z1s11-controller</span></div><div class="li" style="left:351.80px"><i style="background:#ff9830"></i><span>OB r1z1s12-controller</span></div><div class="li" style="left:468.90px"><i style="background:#f2495c"></i><span>OB r1z1s2-controller</span></div><div class="li" style="left:581.80px"><i style="background:#5794f2"></i><span>OB r1z1s3-controller</span></div><div class="li" style="left:693.90px"><i style="background:#b877d9"></i><span>OB r1z1s4-controller</span></div><div class="li" style="left:806.80px"><i style="background:#705da0"></i><span>OB r1z1s5-controller</span></div><div class="li" style="left:918.90px"><i style="background:#37872d"></i><span>OB r1z1s6-controller</span></div><div class="li" style="left:1031.80px"><i style="background:#fade2a"></i><span>OB r1z1s7-controller</span></div><div class="li" style="left:1143.90px"><i style="background:#447ebc"></i><span>OB r1z1s8-controller</span></div><div class="li" style="left:1256.80px"><i style="background:#e0752d"></i><span>OB r1z1s9-controller</span></div></div>
</div>

<div class="abs" style="left:1782.5px;top:683.5px;width:5px;height:5px;border-right:1.3px solid #6a6a6e;border-bottom:1.3px solid #6a6a6e"></div>
<!-- scrollbar -->
<div class="abs" style="left:1795px;top:41px;width:8px;height:345px;border-radius:4px;background:#2a302f"></div>

</body></html>
